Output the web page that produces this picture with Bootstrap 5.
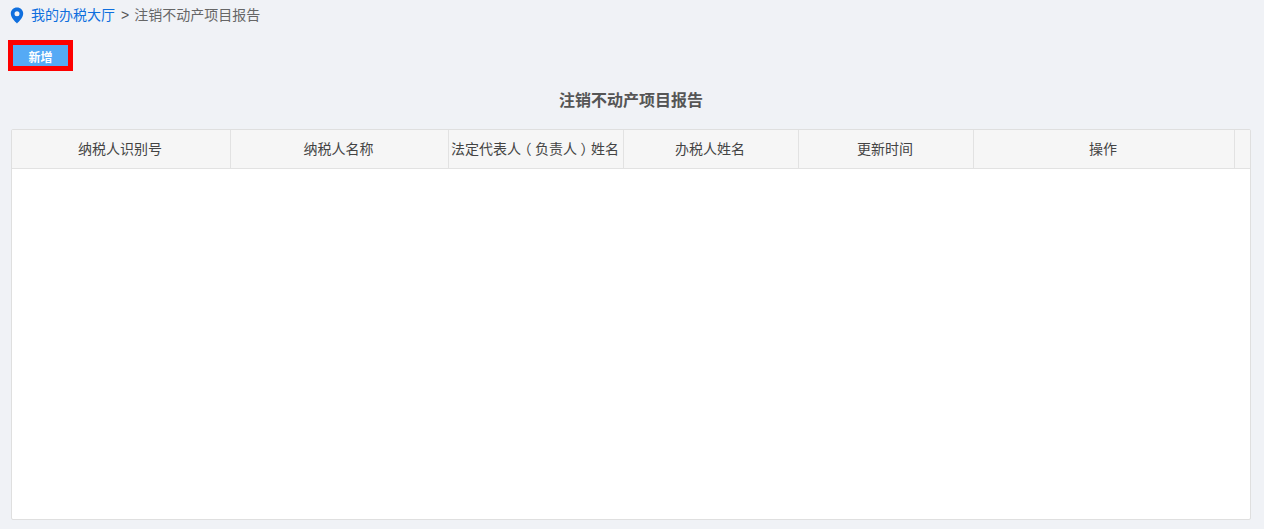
<!DOCTYPE html>
<html lang="zh-CN">
<head>
<meta charset="utf-8">
<title>注销不动产项目报告</title>
<link href="https://cdn.jsdelivr.net/npm/bootstrap@5.3.0/dist/css/bootstrap.min.css" rel="stylesheet">
<style>
html,body{height:529px;overflow:hidden}
body{background:#f0f2f6;font-family:"Liberation Sans","Noto Sans CJK SC",sans-serif;font-size:14px;color:#555;padding:0 13px 9px 11px;display:flex;flex-direction:column}
.crumbs{height:30px;margin-left:-1px;font-size:14px;line-height:30px;color:#666}
.crumbs a{color:#0f6fde;text-decoration:none}
.crumbs svg{margin-right:7px;flex:none}
.crumbs .sep{margin:0 5px 0 6px;color:#555}
.add-wrap{margin:10px 0 0 -3px;align-self:flex-start;border:5px solid #fe0000;line-height:0}
.add-btn{width:55px;height:21px;background:#55aaf5;color:#fff;font-size:12px;font-weight:700;border:0;border-radius:0;padding:4px 0 0;line-height:18px}
.page-title{font-size:16px;font-weight:700;color:#555;text-align:center;margin:0;padding-top:18px;line-height:24px;height:58px}
.grid-box{flex:1;background:#fff;border:1px solid #dfdfdf;border-radius:2px;overflow:hidden;min-height:0}
.grid-head{table-layout:fixed;width:1238px;margin:0;border-collapse:separate;border-spacing:0;--bs-table-bg:#f6f6f6;--bs-table-color:#444}
.grid-head th{height:39px;padding:0 2px 0 0;font-weight:400;font-size:14px;text-align:center;vertical-align:middle;background:#f6f6f6;border:0;border-right:1px solid #e2e2e2;border-bottom:1px solid #e2e2e2;white-space:nowrap;overflow:hidden}
.grid-head th:last-child{border-right:0}
.paren-c{font-feature-settings:"halt";margin:0 3.5px}
.w-a{width:219px}.w-b{width:218px}.w-c{width:175px}.w-d{width:261px}.w-e{width:15px}
</style>
</head>
<body>
<nav class="crumbs d-flex align-items-center">
<svg width="14" height="17" viewBox="0 0 14 17" aria-hidden="true"><path fill="#0f6fde" fill-rule="evenodd" d="M7 0.5C3.4 0.5 0.8 3.2 0.8 6.6C0.8 10.6 5 14.7 7 16.5C9 14.7 13.2 10.6 13.2 6.6C13.2 3.2 10.6 0.5 7 0.5ZM7 4.2A2.5 2.5 0 1 1 7 9.2A2.5 2.5 0 1 1 7 4.2Z"/></svg>
<a href="#">我的办税大厅</a><span class="sep">&gt;</span><span>注销不动产项目报告</span>
</nav>
<div class="add-wrap"><button type="button" class="btn add-btn">新增</button></div>
<h1 class="page-title">注销不动产项目报告</h1>
<div class="grid-box">
<table class="table grid-head">
<colgroup><col class="w-a"><col class="w-b"><col class="w-c"><col class="w-c"><col class="w-c"><col class="w-d"><col class="w-e"></colgroup>
<thead><tr><th>纳税人识别号</th><th>纳税人名称</th><th>法定代表人<span class="paren-c">（</span>负责人<span class="paren-c">）</span>姓名</th><th>办税人姓名</th><th>更新时间</th><th>操作</th><th></th></tr></thead>
</table>
</div>
<script src="https://cdn.jsdelivr.net/npm/bootstrap@5.3.0/dist/js/bootstrap.bundle.min.js"></script>
</body>
</html>
